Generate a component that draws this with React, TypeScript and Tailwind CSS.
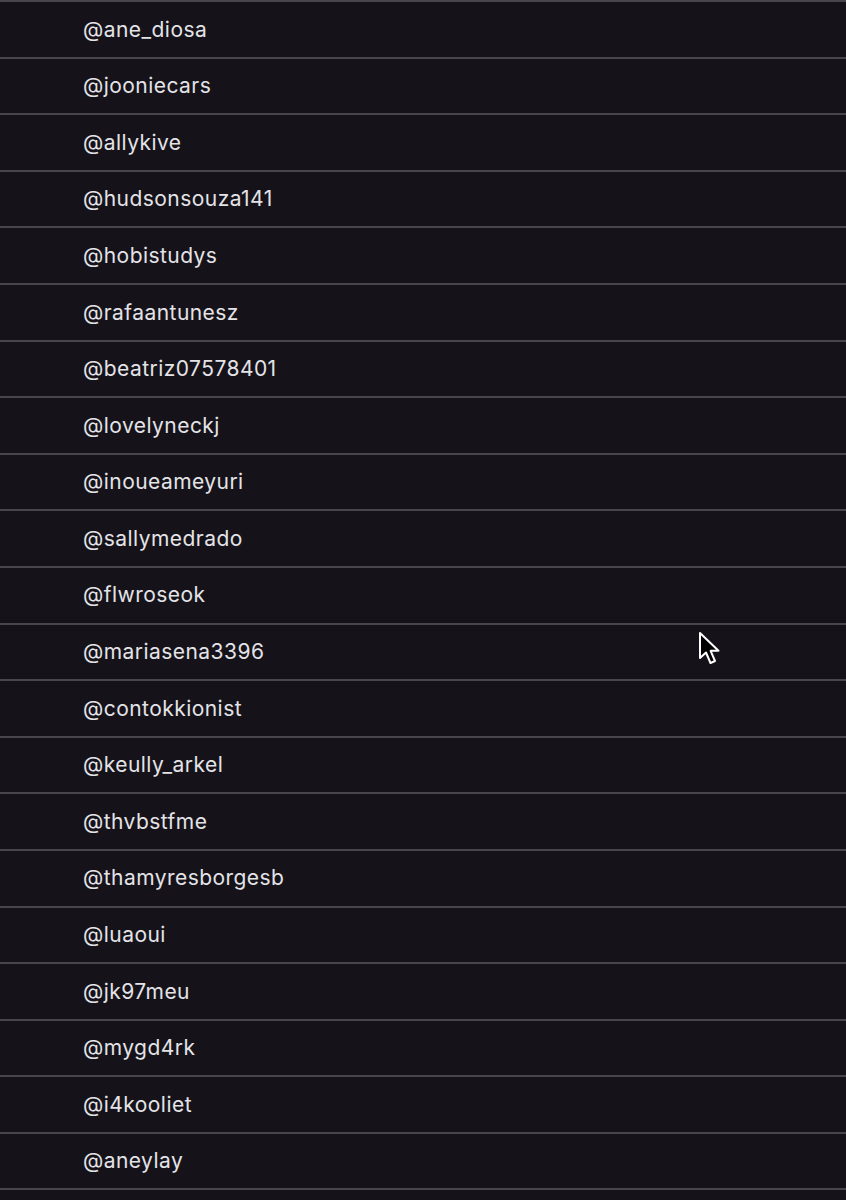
const handles = [
  "@ane_diosa",
  "@jooniecars",
  "@allykive",
  "@hudsonsouza141",
  "@hobistudys",
  "@rafaantunesz",
  "@beatriz07578401",
  "@lovelyneckj",
  "@inoueameyuri",
  "@sallymedrado",
  "@flwroseok",
  "@mariasena3396",
  "@contokkionist",
  "@keully_arkel",
  "@thvbstfme",
  "@thamyresborgesb",
  "@luaoui",
  "@jk97meu",
  "@mygd4rk",
  "@i4kooliet",
  "@aneylay",
];

function Cursor() {
  return (
    <svg
      className="absolute left-[697px] top-[631px]"
      width="24"
      height="36"
      viewBox="0 0 24 36"
    >
      <path
        d="M3 2 L3 27 L9 21.5 L13.5 32 L18 30 L13.6 19.8 L21.5 19.8 Z"
        fill="#000"
        stroke="#fff"
        strokeWidth="2"
        strokeLinejoin="round"
      />
    </svg>
  );
}

export default function App() {
  return (
    <div
      className="relative w-[846px] h-[1200px] bg-[#151319] overflow-hidden"
      style={{ fontFamily: "Inter, 'Noto Sans', sans-serif" }}
    >
      <div className="border-t-2 border-[#47464b]">
        {handles.map((h) => (
          <div
            key={h}
            className="h-[56.6px] flex items-center pl-[83px] border-b-2 border-[#47464b]"
          >
            <span className="text-[21px] text-[#e4e3e8] tracking-[0.45px]">{h}</span>
          </div>
        ))}
      </div>
      <Cursor />
    </div>
  );
}
